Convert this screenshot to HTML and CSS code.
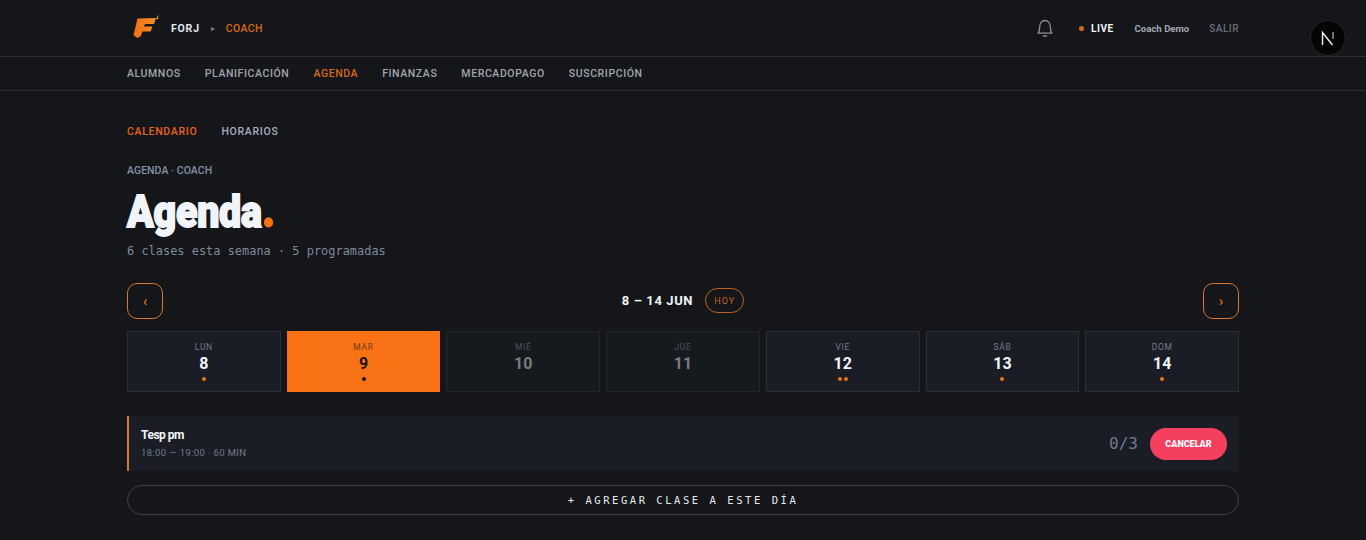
FILE: index.html
```html
<!DOCTYPE html>
<html lang="es">
  <head>
    <meta charset="UTF-8" />
    <meta name="viewport" content="width=device-width, initial-scale=1.0" />
    <title>Agenda</title>
    <link rel="stylesheet" href="styles.css">
  </head>
  <body>
    <header class="topbar">
      <div class="brand">
        <svg class="logo" width="26" height="25" viewBox="0 0 26 25">
          <defs>
            <linearGradient id="logo-fill" x1="0" y1="0" x2="1" y2="0">
              <stop offset="0" stop-color="#ee6f18" />
              <stop offset="1" stop-color="#fb8d1f" />
            </linearGradient>
          </defs>
          <path d="M4.5 4.5 L23 4 L21 10 L12 10 L11 12.5 L19.5 12.5 L17.5 17.5 L9.5 17.5 L7.5 22.5 L4 24 L0.5 21 Z" fill="url(#logo-fill)" />
          <path d="M23 5.5 L25.5 0.5 L25 5 Z" fill="#f5b63a" />
        </svg>
        <span class="brand-name">FORJ</span>
        <span class="brand-sep">&#9656;</span>
        <span class="brand-role">COACH</span>
      </div>
      <div class="top-right">
        <svg class="bell" width="18" height="19" viewBox="0 0 18 19" fill="none" stroke="#8b8f97" stroke-width="1.3">
          <path d="M2 14.2 C3.4 12.8 3.6 11.5 3.6 8.2 C3.6 4.4 5.8 1.5 9 1.5 C12.2 1.5 14.4 4.4 14.4 8.2 C14.4 11.5 14.6 12.8 16 14.2 Z" stroke-linejoin="round" />
          <path d="M7.4 16.6 C8 17.6 10 17.6 10.6 16.6" stroke-linecap="round" />
        </svg>
        <span class="live"><i class="live-dot"></i>LIVE</span>
        <span class="user">Coach Demo</span>
        <span class="logout">SALIR</span>
      </div>
    </header>

    <nav class="mainnav">
      <a>ALUMNOS</a>
      <a>PLANIFICACIÓN</a>
      <a class="active">AGENDA</a>
      <a>FINANZAS</a>
      <a>MERCADOPAGO</a>
      <a>SUSCRIPCIÓN</a>
    </nav>

    <main class="page">
      <div class="tabs">
        <a class="active">CALENDARIO</a>
        <a>HORARIOS</a>
      </div>

      <div class="crumb">AGENDA · COACH</div>
      <h1 class="title">Agenda<span>.</span></h1>
      <p class="subtitle">6 clases esta semana · 5 programadas</p>

      <div class="weeknav">
        <button class="arrow">&#8249;</button>
        <div class="weeklabel">
          <strong>8 – 14 JUN</strong>
          <button class="today">HOY</button>
        </div>
        <button class="arrow">&#8250;</button>
      </div>

      <div class="days">
        <div class="day"><small>LUN</small><b>8</b><div class="dots"><i></i></div></div>
        <div class="day selected"><small>MAR</small><b>9</b><div class="dots"><i></i></div></div>
        <div class="day empty"><small>MIÉ</small><b>10</b><div class="dots"></div></div>
        <div class="day empty"><small>JUE</small><b>11</b><div class="dots"></div></div>
        <div class="day"><small>VIE</small><b>12</b><div class="dots"><i></i><i></i></div></div>
        <div class="day"><small>SÁB</small><b>13</b><div class="dots"><i></i></div></div>
        <div class="day"><small>DOM</small><b>14</b><div class="dots"><i></i></div></div>
      </div>

      <div class="classcard">
        <div>
          <div class="classname">Tesp pm</div>
          <div class="classtime">18:00 — 19:00 · 60 MIN</div>
        </div>
        <div class="classright">
          <span class="count">0/3</span>
          <button class="cancel">CANCELAR</button>
        </div>
      </div>

      <button class="addclass">+ AGREGAR CLASE A ESTE DÍA</button>
    </main>

    <div class="devbadge">
      <svg width="14" height="15" viewBox="0 0 14 15" fill="none" stroke="#f4f4f4">
        <path d="M1.5 14 L1.5 1.5 L11.5 14" stroke-width="1.4" />
        <path d="M12 1 L12 8" stroke-width="0.9" />
      </svg>
    </div>
  </body>
</html>
```

FILE: styles.css
```css
* {
  margin: 0px;
  padding: 0px;
  box-sizing: border-box;
}
html,
body {
  height: 540px;
  overflow: hidden;
}
body {
  background-color: #14161a;
  color: #f1f5f9;
  font-family: "Roboto", "Liberation Sans", sans-serif;
  position: relative;
}
button {
  background: none;
  border: none;
  font-family: inherit;
}

/* top bar */
.topbar {
  height: 57px;
  border-bottom: 1px solid #2b2e33;
  padding: 0 127px 0 133px;
  display: flex;
  align-items: center;
  justify-content: space-between;
}
.brand {
  display: flex;
  align-items: center;
}
.logo {
  margin-right: 12px;
  margin-top: -3px;
}
.brand-name {
  font-size: 10.5px;
  font-weight: 700;
  letter-spacing: 0.8px;
  color: #e5e7eb;
}
.brand-sep {
  font-size: 8px;
  color: #7d8087;
  margin: 0 11px;
}
.brand-role {
  font-size: 10.5px;
  font-weight: 500;
  letter-spacing: 0.4px;
  color: #d8691c;
}
.top-right {
  display: flex;
  align-items: center;
}
.bell {
  margin-right: 25px;
}
.live {
  font-size: 10px;
  font-weight: 700;
  letter-spacing: 0.5px;
  color: #f1f5f9;
  display: flex;
  align-items: center;
  margin-right: 21px;
}
.live-dot {
  width: 5px;
  height: 5px;
  border-radius: 50%;
  background-color: #d8691c;
  margin-right: 7px;
}
.user {
  font-size: 9.6px;
  font-weight: 700;
  color: #a3a8b0;
  margin-right: 20px;
}
.logout {
  font-size: 10px;
  font-weight: 500;
  letter-spacing: 0.5px;
  color: #6b6f77;
}

/* main nav */
.mainnav {
  height: 34px;
  border-bottom: 1px solid #2b2e33;
  padding: 0 127px;
  display: flex;
  align-items: center;
  gap: 24px;
}
.mainnav a {
  font-size: 10.5px;
  font-weight: 500;
  letter-spacing: 0.6px;
  color: #a1a5ad;
}
.mainnav a.active {
  color: #d8691c;
}

.page {
  padding: 34px 127px 0;
}
.tabs {
  display: flex;
  gap: 24px;
  height: 13px;
  line-height: 13px;
}
.tabs a {
  font-size: 10.5px;
  font-weight: 500;
  letter-spacing: 0.7px;
  color: #a3aebd;
}
.tabs a.active {
  color: #e8641e;
}
.crumb {
  margin-top: 26px;
  height: 13px;
  line-height: 13px;
  font-size: 10.5px;
  font-weight: 500;
  letter-spacing: 0.05px;
  color: #8491a5;
}
.title {
  margin-top: 13px;
  height: 44px;
  line-height: 44px;
  font-family: "Roboto", sans-serif;
  font-size: 45px;
  font-weight: 900;
  -webkit-text-stroke: 1.8px #f1f5f9;
  letter-spacing: -0.3px;
  color: #f1f5f9;
  transform: scaleX(0.875);
  transform-origin: left center;
}
.title span {
  font-family: "Lato", sans-serif;
  font-size: 58px;
  line-height: 0;
  margin-left: 1px;
  color: #f97316;
  -webkit-text-stroke: 1px #f97316;
}
.subtitle {
  margin-top: 10px;
  height: 15px;
  line-height: 15px;
  font-family: "DejaVu Sans Mono", "Liberation Mono", monospace;
  font-size: 11.9px;
  letter-spacing: 0.03px;
  color: #7f8a9c;
}

/* week nav */
.weeknav {
  margin-top: 24px;
  display: flex;
  align-items: center;
  justify-content: space-between;
}
.arrow {
  width: 36px;
  height: 36px;
  border: 1px solid #d8772a;
  border-radius: 10px;
  color: #e8701e;
  font-size: 15px;
  font-weight: 500;
}
.weeklabel {
  display: flex;
  align-items: center;
  gap: 12px;
  margin-top: -1px;
}
.weeklabel strong {
  font-size: 13px;
  font-weight: 700;
  letter-spacing: 0.6px;
  color: #f1f5f9;
}
.today {
  width: 39px;
  height: 25px;
  border: 1px solid #c2621f;
  border-radius: 13px;
  font-size: 9px;
  letter-spacing: 1px;
  color: #c2621f;
}

/* day cells */
.days {
  margin-top: 12px;
  display: grid;
  grid-template-columns: repeat(7, 1fr);
  gap: 6px;
}
.day {
  height: 61px;
  background-color: #1a1d25;
  border: 1px solid #2a2f37;
  display: flex;
  flex-direction: column;
  align-items: center;
  padding-top: 10px;
}
.day small {
  height: 11px;
  line-height: 11px;
  font-size: 8.5px;
  letter-spacing: 0.7px;
  color: #737c8a;
}
.day b {
  height: 19px;
  line-height: 19px;
  margin-top: 1px;
  font-size: 16px;
  font-weight: 700;
  color: #f1f5f9;
}
.dots {
  margin-top: 4px;
  height: 4px;
  display: flex;
  gap: 2px;
}
.dots i {
  width: 4px;
  height: 4px;
  border-radius: 50%;
  background-color: #ea7317;
}
.day.selected {
  background-color: #f97316;
  border-color: #f97316;
}
.day.selected small {
  color: #6e3a12;
}
.day.selected b {
  color: #1b1410;
}
.day.selected .dots i {
  background-color: #14161a;
}
.day.empty {
  background-color: #16191e;
  border-color: #23262c;
}
.day.empty small {
  color: #4d525c;
}
.day.empty b {
  color: #7a7d83;
}

/* class */
.classcard {
  margin-top: 24px;
  height: 55px;
  background-color: #1a1d25;
  border-left: 2px solid #d8772a;
  padding: 0 12px 0 12px;
  display: flex;
  align-items: center;
  justify-content: space-between;
}
.classname {
  font-size: 12px;
  font-weight: 700;
  letter-spacing: -0.5px;
  color: #f1f5f9;
  line-height: 15px;
  margin-bottom: 4px;
}
.classtime {
  font-size: 9.5px;
  letter-spacing: 0.37px;
  color: #6f7a8a;
  line-height: 12px;
}
.classright {
  display: flex;
  align-items: center;
  gap: 12px;
}
.count {
  font-family: "DejaVu Sans Mono", monospace;
  font-size: 16px;
  font-weight: 500;
  color: #6f7a8c;
}
.cancel {
  width: 77px;
  height: 32px;
  border-radius: 16px;
  background-color: #f43f5e;
  color: #f8fafc;
  font-size: 9px;
  font-weight: 900;
}
.addclass {
  display: block;
  margin-top: 14px;
  width: 100%;
  height: 30px;
  border: 1px solid #3d4046;
  border-radius: 15px;
  font-family: "DejaVu Sans Mono", monospace;
  font-size: 10.5px;
  letter-spacing: 2.55px;
  color: #e6e9ed;
}

/* dev indicator sits over the header */
.devbadge {
  position: absolute;
  left: 1310px;
  top: 20px;
  width: 36px;
  height: 36px;
  border-radius: 50%;
  background-color: #050505;
  border: 1px solid #26282c;
  display: flex;
  align-items: center;
  justify-content: center;
}
```
